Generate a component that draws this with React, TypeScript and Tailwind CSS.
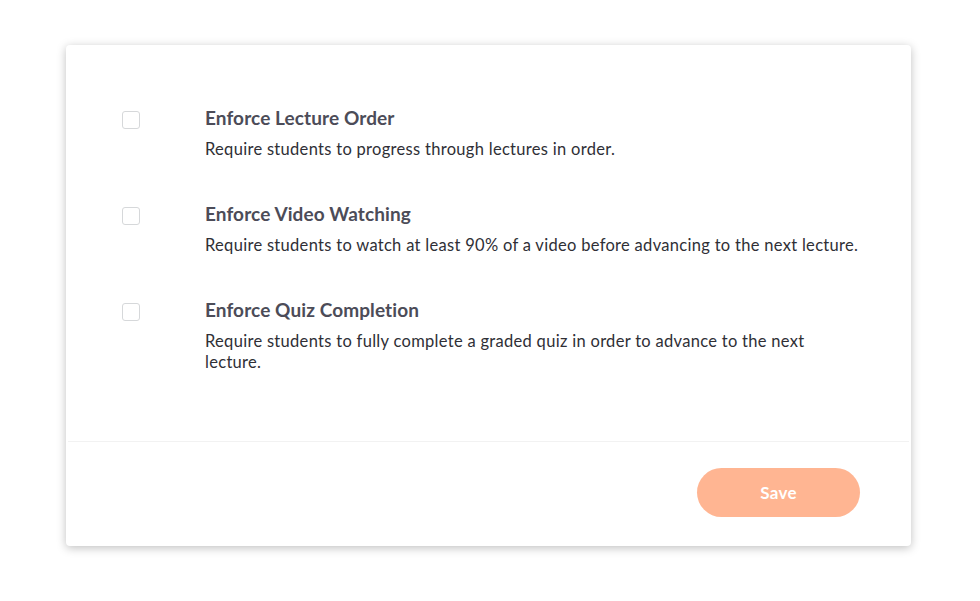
import React from "react";

const items = [
  {
    title: "Enforce Lecture Order",
    desc: "Require students to progress through lectures in order.",
  },
  {
    title: "Enforce Video Watching",
    desc: "Require students to watch at least 90% of a video before advancing to the next lecture.",
  },
  {
    title: "Enforce Quiz Completion",
    desc: "Require students to fully complete a graded quiz in order to advance to the next lecture.",
  },
];

export default function App() {
  return (
    <div
      className="w-[980px] h-[601px] bg-white pt-[45px] pl-[66px]"
      style={{ fontFamily: "Lato, 'Open Sans', sans-serif" }}
    >
      <div className="w-[845px] h-[501px] bg-white rounded-[4px] shadow-[0_2px_10px_rgba(0,0,0,0.25)] flex flex-col">
        <div className="h-[396px] pt-[62px] pl-[56px] flex flex-col gap-[43px]">
          {items.map((it) => (
            <div key={it.title} className="flex">
              <div className="w-[18px] h-[18px] mt-[4px] rounded-[3px] border border-[#d6d8da] bg-white shrink-0" />
              <div className="ml-[65px] w-[656px]">
                <div className="text-[19px] leading-[22px] font-bold text-[#4c4c58] tracking-[0.1px]">{it.title}</div>
                <div className="mt-[10px] text-[16.5px] leading-[21px] text-[#2f2f36] tracking-[0.3px]">{it.desc}</div>
              </div>
            </div>
          ))}
        </div>
        <div className="h-px bg-[#f2f2f2] mx-[2px]" />
        <div className="flex justify-end pr-[51px] pt-[26px]">
          <button className="w-[163px] h-[49px] rounded-full bg-[#ffb592] text-white text-[17px] font-bold tracking-[0.3px]">
            Save
          </button>
        </div>
      </div>
    </div>
  );
}
